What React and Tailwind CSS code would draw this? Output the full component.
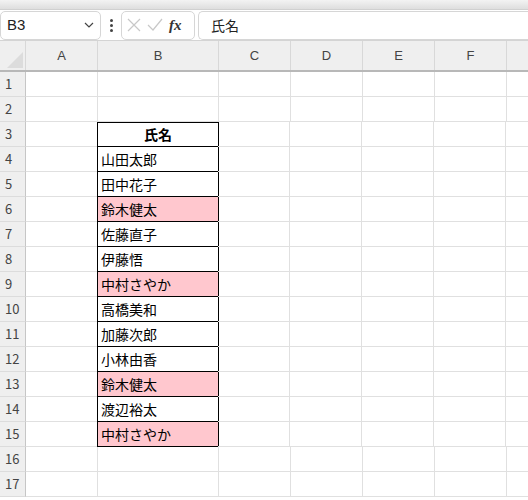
const names = ["山田太郎","田中花子","鈴木健太","佐藤直子","伊藤悟","中村さやか","高橋美和","加藤次郎","小林由香","鈴木健太","渡辺裕太","中村さやか"];
const pink = [2,5,9,11];
const cols = [["A",72],["B",121],["C",72],["D",72],["E",72],["F",72],["",72]];
const F = {fontFamily:'"Liberation Sans","Noto Sans CJK JP",sans-serif'};

function Row({n}) {
  const isTable = n>=3 && n<=15;
  const idx = n-4;
  const header = n===3;
  const isPink = idx>=0 && pink.includes(idx);
  return (
    <div className="flex h-[25px]">
      <div className="w-[26px] shrink-0 bg-[#efefef] border-r border-[#c6c6c6] border-b border-b-[#dcdcdc] text-[13px] text-[#444] pl-[5px] flex items-center">{n}</div>
      <div className="w-[72px] shrink-0 border-r border-b border-[#e0e0e0]"></div>
      {isTable ? (
        <div className={`w-[122px] shrink-0 border border-black ${header?'':'border-t-0'} -ml-px ${isPink?'bg-[#ffc7ce]':'bg-white'} text-[14px] text-black flex items-center ${header?'justify-center font-bold':'pl-[3px]'}`}>
          {header ? "氏名" : names[idx]}
        </div>
      ) : (
        <div className="w-[121px] shrink-0 border-r border-b border-[#e0e0e0]"></div>
      )}
      {[0,1,2,3,4].map(i=> <div key={i} className={`w-[72px] shrink-0 border-r border-b border-[#e0e0e0] ${isTable && i===0 ? '-ml-px' : ''}`}></div>)}
    </div>
  );
}

export default function App() {
  return (
    <div className="w-[528px] h-[500px] overflow-hidden bg-white" style={F}>
      <div className="h-[10px] bg-gradient-to-b from-[#f3f3f3] to-[#dedede] border-b border-[#d0d0d0]"></div>
      <div className="h-[31px] flex items-center gap-[3px] pl-0 border-b border-[#d4d4d4]">
        <div className="w-[101px] h-[29px] border border-[#d6d6d6] rounded-[5px] flex items-center justify-between px-[6px] text-[15px] text-[#222]">
          <span>B3</span>
          <svg width="10" height="6" viewBox="0 0 10 6"><path d="M1 1l4 4 4-4" stroke="#444" fill="none" strokeWidth="1.2"/></svg>
        </div>
        <div className="w-[14px] flex flex-col items-center gap-[2px]">
          <span className="w-[3px] h-[3px] bg-[#444] rounded-full"></span>
          <span className="w-[3px] h-[3px] bg-[#444] rounded-full"></span>
          <span className="w-[3px] h-[3px] bg-[#444] rounded-full"></span>
        </div>
        <div className="w-[74px] h-[29px] border border-[#d6d6d6] rounded-[5px] flex items-center gap-[6px] px-[5px]">
          <svg width="14" height="14" viewBox="0 0 14 14"><path d="M1 1l12 12M13 1L1 13" stroke="#c8c8c8" strokeWidth="1.2"/></svg>
          <svg width="16" height="14" viewBox="0 0 16 14"><path d="M1 7l5 5L15 1" stroke="#c8c8c8" fill="none" strokeWidth="1.2"/></svg>
          <span className="italic text-[15px] text-[#333] font-bold" style={{fontFamily:'"Liberation Serif",serif'}}>fx</span>
        </div>
        <div className="flex-1 h-[29px] border border-[#d6d6d6] rounded-l-[5px] border-r-0 flex items-center pl-[12px] text-[14px] text-[#222]" style={{fontFamily:'"Noto Sans CJK JP",sans-serif'}}>氏名</div>
      </div>
      <div className="h-[31px] flex bg-[#efefef] border-b-2 border-[#b8b8b8]">
        <div className="w-[26px] shrink-0 border-r border-[#d8d8d8] relative">
          <svg className="absolute right-[2px] bottom-[2px]" width="16" height="16"><path d="M16 0V16H0Z" fill="#dcdcdc"/></svg>
        </div>
        {cols.map(([c,w],i)=>(
          <div key={i} style={{width:w}} className="shrink-0 border-r border-[#d8d8d8] flex items-center justify-center text-[13px] text-[#444]">{c}</div>
        ))}
      </div>
      <div style={{fontFamily:'"Noto Sans CJK JP",sans-serif'}}>
        {Array.from({length:17},(_,i)=><Row key={i} n={i+1}/>)}
      </div>
    </div>
  );
}
